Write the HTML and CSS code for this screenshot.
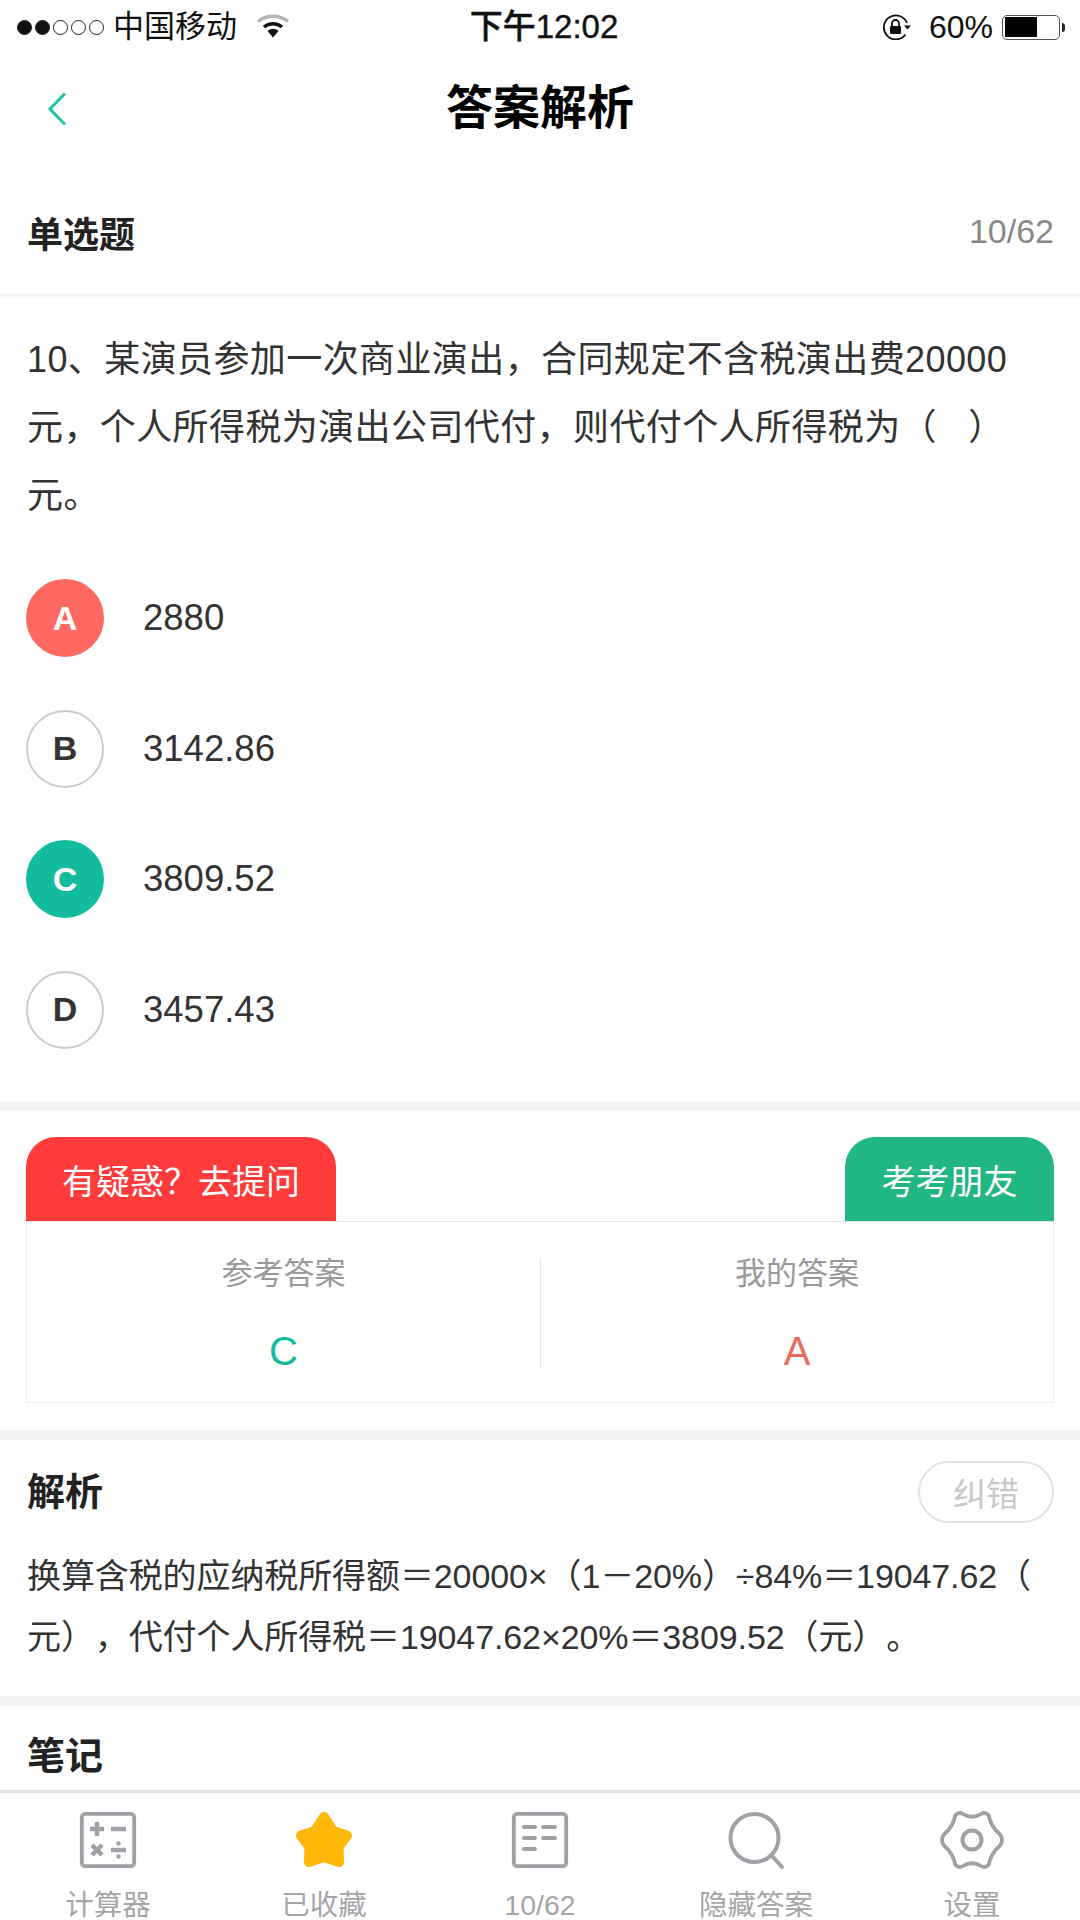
FILE: index.html
```html
<!DOCTYPE html>
<html lang="zh">
<head>
<meta charset="utf-8">
<title>答案解析</title>
<link rel="stylesheet" href="styles.css">
</head>
<body>
<div class="app">
  <header class="status">
    <div class="status-left">
      <span class="signal"><i class="on"></i><i class="on"></i><i></i><i></i><i></i></span>
      <span class="carrier">中国移动</span>
      <svg class="wifi" viewBox="0 0 32 24"><path d="M1 7.500C9.500 .5 22.500 .5 31 7.500" fill="none" stroke="#b5b5b5" stroke-width="3.500"/><path d="M7 13C12 8.500 20 8.500 25 13" fill="none" stroke="#111" stroke-width="3.500"/><path d="M10.500 17C14 14 18 14 21.500 17L16 23.500Z" fill="#111"/></svg>
    </div>
    <div class="status-time">下午12:02</div>
    <div class="status-right">
      <svg class="lock" viewBox="0 0 30 26"><path d="M23.500 20.500A12 12 0 1 1 25 9" fill="none" stroke="#111" stroke-width="1.800"/><path d="M22 11.500h7l-3.500 4z" fill="#111"/><rect x="8" y="12" width="11" height="8" rx="1" fill="#111"/><path d="M10 12V9.500a3.500 3.500 0 0 1 7 0V12" fill="none" stroke="#111" stroke-width="1.800"/></svg>
      <span class="pct">60%</span>
      <span class="battery"><span class="battery-fill"></span></span><span class="battery-nub"></span>
    </div>
  </header>

  <nav class="nav">
    <svg class="back" viewBox="0 0 20 34"><path d="M18 1.500 3 17l15 15.500" fill="none" stroke="#1fc2a2" stroke-width="3"/></svg>
    <h1 class="title">答案解析</h1>
  </nav>

  <main class="content">
    <section class="qhead">
      <span class="qtype">单选题</span>
      <span class="qcount">10/62</span>
    </section>

    <section class="question">
      <p class="qtext">10、某演员参加一次商业演出，合同规定不含税演出费20000<br>元，个人所得税为演出公司代付，则代付个人所得税为（&nbsp;&nbsp;&nbsp;）<br>元。</p>
      <ul class="options">
        <li class="option"><span class="badge badge-wrong">A</span><span class="opt-text">2880</span></li>
        <li class="option"><span class="badge">B</span><span class="opt-text">3142.86</span></li>
        <li class="option"><span class="badge badge-right">C</span><span class="opt-text">3809.52</span></li>
        <li class="option"><span class="badge">D</span><span class="opt-text">3457.43</span></li>
      </ul>
    </section>

    <section class="answer">
      <div class="tabs">
        <span class="tab tab-ask">有疑惑？去提问</span>
        <span class="tab tab-quiz">考考朋友</span>
      </div>
      <div class="answer-box">
        <div class="answer-col">
          <span class="answer-label">参考答案</span>
          <span class="answer-value value-right">C</span>
        </div>
        <div class="answer-col">
          <span class="answer-label">我的答案</span>
          <span class="answer-value value-wrong">A</span>
        </div>
      </div>
    </section>

    <section class="analysis">
      <div class="analysis-head">
        <h2 class="sec-title">解析</h2>
        <span class="report">纠错</span>
      </div>
      <p class="analysis-text">换算含税的应纳税所得额＝20000×（1－20%）÷84%＝19047.62（<br>元），代付个人所得税＝19047.62×20%＝3809.52（元）。</p>
    </section>

    <section class="notes">
      <h2 class="sec-title">笔记</h2>
    </section>
  </main>

  <footer class="tabbar">
    <div class="tabitem">
      <svg class="ticon" viewBox="0 0 60 60"><rect x="3.800" y="3.800" width="52.400" height="52.400" rx="3.500" fill="none" stroke="#a0a1a6" stroke-width="3.800"/><path d="M12 19h14M19 12v14M33 19h15M14 35l10 10M24 35 14 45M33 40h15" fill="none" stroke="#a0a1a6" stroke-width="4.500"/><circle cx="40.500" cy="33.500" r="2.200" fill="#a0a1a6"/><circle cx="40.500" cy="46.500" r="2.200" fill="#a0a1a6"/></svg>
      <span class="tlabel">计算器</span>
    </div>
    <div class="tabitem">
      <svg class="ticon" viewBox="0 0 60 60"><polygon points="30,7 39,21 53,25.500 44.500,37 45,52 30,47 15,52 15.500,37 7,25.500 21,21" fill="#ffb80a" stroke="#ffb80a" stroke-width="10" stroke-linejoin="round"/></svg>
      <span class="tlabel">已收藏</span>
    </div>
    <div class="tabitem">
      <svg class="ticon" viewBox="0 0 60 60"><rect x="3.800" y="3.800" width="52.400" height="52.400" rx="3.500" fill="none" stroke="#a0a1a6" stroke-width="3.800"/><path d="M14 17h11M33 17h12M14 28h11M33 28h12M14 39h11" fill="none" stroke="#a0a1a6" stroke-width="4" stroke-linecap="round"/></svg>
      <span class="tlabel">10/62</span>
    </div>
    <div class="tabitem">
      <svg class="ticon" viewBox="0 0 60 60"><circle cx="28.500" cy="28" r="24" fill="none" stroke="#a0a1a6" stroke-width="4"/><path d="M47 47l9 10" fill="none" stroke="#a0a1a6" stroke-width="4" stroke-linecap="round"/></svg>
      <span class="tlabel">隐藏答案</span>
    </div>
    <div class="tabitem">
      <svg class="ticon ticon-gear" viewBox="0 0 64 60"><path d="M15.500 5Q19 1.500 23 4Q32 9.500 41 4Q45 1.500 48.500 5Q51 17 60.500 25Q63.500 30 60.500 35Q51 43 48.500 55Q45 58.500 41 56Q32 50.500 23 56Q19 58.500 15.500 55Q13 43 3.500 35Q.5 30 3.500 25Q13 17 15.500 5Z" fill="none" stroke="#a0a1a6" stroke-width="3.800" stroke-linejoin="round"/><circle cx="32" cy="30" r="9.500" fill="none" stroke="#a0a1a6" stroke-width="4"/></svg>
      <span class="tlabel">设置</span>
    </div>
  </footer>
</div>
</body>
</html>
```
FILE: styles.css
```css
* { box-sizing: border-box; }
html, body { margin: 0; padding: 0; background: #fff; }
body { font-family: "Liberation Sans", "Noto Sans CJK SC", sans-serif; color: #333; }
h1, h2, p, ul { margin: 0; padding: 0; list-style: none; }
.app { width: 1080px; height: 1920px; overflow: hidden; display: flex; flex-direction: column; }

.status { height: 54px; flex: none; display: grid; grid-template-columns: 1fr auto 1fr; align-items: center; padding: 0 15px 0 17px; color: #111; }
.status-left { display: flex; align-items: center; }
.signal { display: flex; gap: 3px; width: 96px; }
.signal i { width: 15px; height: 15px; border-radius: 50%; border: 1.500px solid #222; }
.signal i.on { background: #111; }
.carrier { font-size: 31px; line-height: 54px; }
.wifi { width: 32px; height: 24px; margin-left: 20px; margin-top: -3px; }
.status-time { font-size: 33px; font-weight: 500; line-height: 54px; margin-left: 6px; -webkit-text-stroke: .4px #111; }
.status-right { display: flex; align-items: center; justify-content: flex-end; }
.lock { width: 30px; height: 26px; }
.pct { font-size: 32px; margin-left: 17px; }
.battery { width: 58px; height: 25px; margin-left: 9px; border: 1.500px solid #555; border-radius: 5px; padding: 1.500px; display: block; }
.battery-fill { display: block; width: 32px; height: 100%; background: #000; }
.battery-nub { width: 3px; height: 9px; background: #222; margin-left: 2px; border-radius: 0 4px 4px 0; }

.nav { height: 108px; flex: none; position: relative; display: flex; align-items: center; justify-content: center; }
.back { position: absolute; left: 47px; top: 38px; width: 20px; height: 34px; }
.title { font-size: 47px; font-weight: 700; color: #000; line-height: 108px; }

.content { flex: 1; min-height: 0; overflow: hidden; }
.qhead { height: 136px; display: flex; align-items: center; justify-content: space-between; padding: 8px 26px 0 27px; border-bottom: 5px solid #f7f7f7; }
.qtype { font-size: 36px; font-weight: 700; color: #222; }
.qcount { font-size: 34px; color: #888; }

.question { padding: 28px 26px 0; border-bottom: 10px solid #f4f4f4; height: 813px; }
.qtext { font-size: 36px; letter-spacing: .4px; line-height: 68px; color: #333; padding-left: 1px; white-space: nowrap; }
.options { margin-top: 23px; display: flex; flex-direction: column; }
.option { height: 130.500px; display: flex; align-items: center; }
.badge { width: 78px; height: 78px; border-radius: 50%; border: 2px solid #cbcbcb; display: flex; align-items: center; justify-content: center; font-size: 34px; font-weight: 700; color: #333; }
.badge-wrong { background: #ff6961; border-color: #ff6961; color: #fff; }
.badge-right { background: #12bc9c; border-color: #12bc9c; color: #fff; }
.opt-text { margin-left: 39px; font-size: 36.500px; color: #333; }

.answer { padding: 26px 26px 0; height: 329px; border-bottom: 10px solid #f4f4f4; }
.tabs { display: flex; justify-content: space-between; height: 84px; }
.tab { color: #fff; font-size: 34px; display: flex; align-items: center; justify-content: center; border-radius: 30px 30px 0 0; }
.tab-ask { width: 310px; background: #ff3b3b; }
.tab-quiz { width: 209px; background: #22b683; }
.answer-box { height: 182px; border: 1px solid #ececec; border-top-color: #e6e6e6; display: grid; grid-template-columns: 1fr 1fr; padding: 36px 0 0; }
.answer-col { height: 110px; display: flex; flex-direction: column; align-items: center; justify-content: space-between; }
.answer-col + .answer-col { border-left: 1px solid #e6e6e6; }
.answer-label { font-size: 31px; line-height: 32px; color: #999; }
.answer-value { font-size: 40px; line-height: 40px; margin-bottom: -3px; }
.value-right { color: #12bc9c; }
.value-wrong { color: #ea6a60; }

.analysis { padding: 21px 26px 0 27px; height: 266px; border-bottom: 10px solid #f4f4f4; }
.analysis-head { display: flex; justify-content: space-between; align-items: center; height: 62px; }
.sec-title { font-size: 38px; font-weight: 700; color: #222; line-height: 62px; }
.report { width: 136px; height: 62px; border: 2px solid #e2e2e2; border-radius: 31px; color: #c8c8c8; font-size: 33px; display: flex; align-items: center; justify-content: center; }
.analysis-text { font-size: 34px; letter-spacing: -.1px; line-height: 61px; color: #333; margin-top: 23px; white-space: nowrap; text-spacing-trim: space-all; }

.notes { padding: 19px 27px 0; }

.tabbar { height: 130px; flex: none; border-top: 3px solid #e2e2e2; display: flex; padding-top: 17px; background: #fff; }
.tabitem { width: 216px; display: flex; flex-direction: column; align-items: center; }
.ticon { width: 60px; height: 60px; flex: none; }
.ticon-gear { width: 64px; }
.tlabel { font-size: 28.500px; line-height: 36px; margin-top: 17px; color: #a5a5a8; white-space: nowrap; }
```
